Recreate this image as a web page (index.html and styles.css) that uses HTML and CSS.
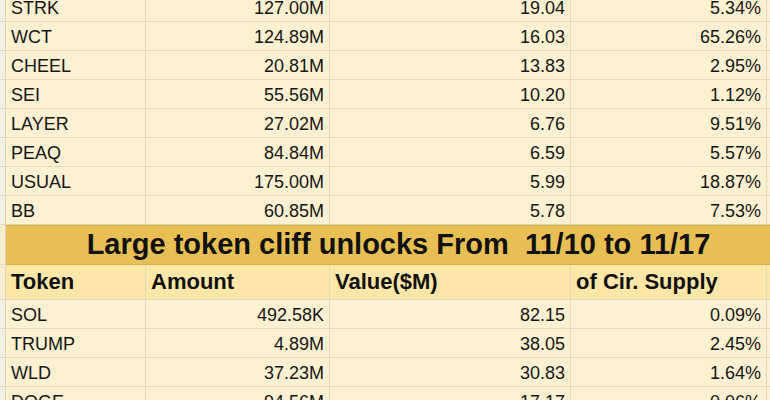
FILE: index.html
```html
<!DOCTYPE html>
<html>
<head>
<meta charset="utf-8">
<link rel="stylesheet" href="styles.css">
</head>
<body>
<div class="sheet">
  <div class="row data"><div class="strip"></div><div class="cell">STRK</div><div class="cell num">127.00M</div><div class="cell num">19.04</div><div class="cell num">5.34%</div><div class="rest"></div></div>
  <div class="row data"><div class="strip"></div><div class="cell">WCT</div><div class="cell num">124.89M</div><div class="cell num">16.03</div><div class="cell num">65.26%</div><div class="rest"></div></div>
  <div class="row data"><div class="strip"></div><div class="cell">CHEEL</div><div class="cell num">20.81M</div><div class="cell num">13.83</div><div class="cell num">2.95%</div><div class="rest"></div></div>
  <div class="row data"><div class="strip"></div><div class="cell">SEI</div><div class="cell num">55.56M</div><div class="cell num">10.20</div><div class="cell num">1.12%</div><div class="rest"></div></div>
  <div class="row data"><div class="strip"></div><div class="cell">LAYER</div><div class="cell num">27.02M</div><div class="cell num">6.76</div><div class="cell num">9.51%</div><div class="rest"></div></div>
  <div class="row data"><div class="strip"></div><div class="cell">PEAQ</div><div class="cell num">84.84M</div><div class="cell num">6.59</div><div class="cell num">5.57%</div><div class="rest"></div></div>
  <div class="row data"><div class="strip"></div><div class="cell">USUAL</div><div class="cell num">175.00M</div><div class="cell num">5.99</div><div class="cell num">18.87%</div><div class="rest"></div></div>
  <div class="row data"><div class="strip"></div><div class="cell">BB</div><div class="cell num">60.85M</div><div class="cell num">5.78</div><div class="cell num">7.53%</div><div class="rest"></div></div>
  <div class="row band"><div class="strip"></div><div class="cell title">Large token cliff unlocks From&nbsp; 11/10 to 11/17</div></div>
  <div class="row head"><div class="strip"></div><div class="cell">Token</div><div class="cell">Amount</div><div class="cell">Value($M)</div><div class="cell">of Cir. Supply</div><div class="rest"></div></div>
  <div class="row data"><div class="strip"></div><div class="cell">SOL</div><div class="cell num">492.58K</div><div class="cell num">82.15</div><div class="cell num">0.09%</div><div class="rest"></div></div>
  <div class="row data"><div class="strip"></div><div class="cell">TRUMP</div><div class="cell num">4.89M</div><div class="cell num">38.05</div><div class="cell num">2.45%</div><div class="rest"></div></div>
  <div class="row data"><div class="strip"></div><div class="cell">WLD</div><div class="cell num">37.23M</div><div class="cell num">30.83</div><div class="cell num">1.64%</div><div class="rest"></div></div>
  <div class="row data"><div class="strip"></div><div class="cell">DOGE</div><div class="cell num">94.56M</div><div class="cell num">17.17</div><div class="cell num">0.06%</div><div class="rest"></div></div>
</div>
</body>
</html>
```
FILE: styles.css
```css
* { box-sizing: border-box; }
html, body { margin: 0; padding: 0; background: #fdf1d1; overflow: hidden; }
body { font-family: "Liberation Sans", Arial, Helvetica, sans-serif; color: #161616; }
.sheet { margin-top: -7px; }
.row {
  display: grid;
  grid-template-columns: 6px 140px 184px 241px 196px 1fr;
}
.strip {
  background: #f3efe6;
  border-right: 1px solid #ddd3b6;
  border-bottom: 1px solid #e2d8bc;
}
.cell, .rest {
  border-right: 1px solid #e2d8bc;
  border-bottom: 1px solid #e2d8bc;
  display: flex;
  align-items: flex-end;
  line-height: 1;
  white-space: nowrap;
}
.rest { border-right: none; }
.data { height: 29px; background: #fdf1d1; }
.data .cell { font-size: 18px; padding: 0 5px 4px 5px; }
.data .num { justify-content: flex-end; }
.band { height: 40px; background: #e8bf55; }
.band .strip { background: #f6ecce; }
.band .cell {
  grid-column: 2 / 7;
  border-right: none;
  border-top: 1px solid #d9ad45;
  border-bottom: 1px solid #d9b352;
  justify-content: center;
  font-size: 29px;
  font-weight: bold;
  color: #111;
  padding: 0 0 5px 21px;
}
.head { height: 35px; background: #fce6a8; }
.head .strip { background: #f7edd0; }
.head .cell, .head .rest { background: #fce6a8; }
.head .cell { font-size: 22px; font-weight: bold; color: #111; padding: 0 5px 6px 5px; }
```
